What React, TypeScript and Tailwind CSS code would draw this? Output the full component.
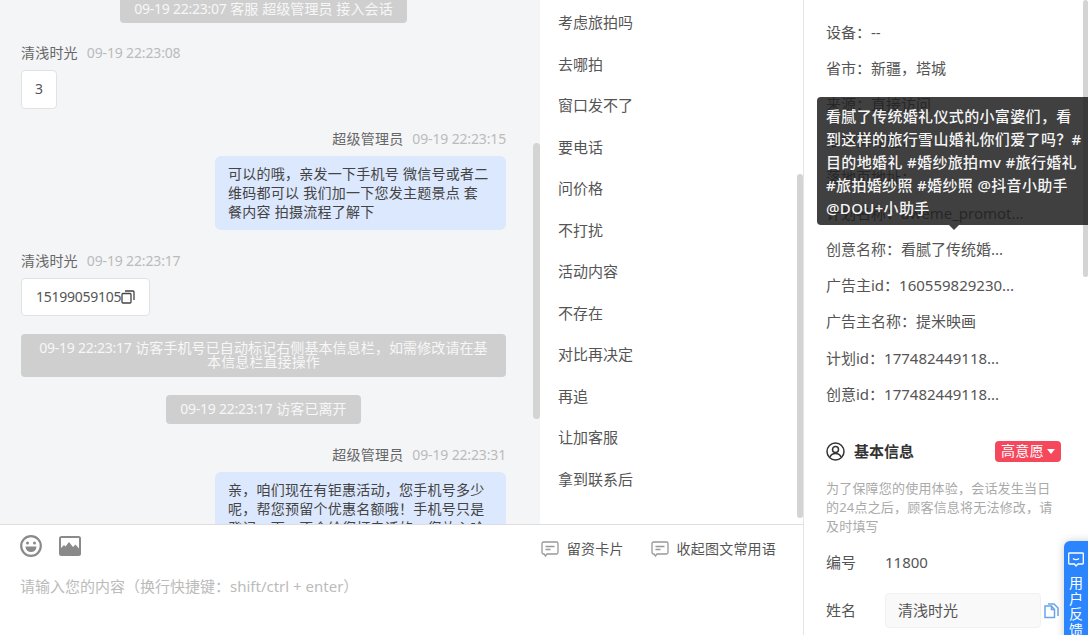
import React from "react";

const FONT = "font-['Noto_Sans','Noto_Sans_CJK_SC',sans-serif]";

const phrases = ["考虑旅拍吗", "去哪拍", "窗口发不了", "要电话", "问价格", "不打扰", "活动内容", "不存在", "对比再决定", "再追", "让加客服", "拿到联系后"];

const infoRows = [
  "设备\uFF1A--",
  "省市\uFF1A新疆\uFF0C塔城",
  "来源\uFF1A直接访问",
  "落地页标题\uFF1A",
  "落地页地址\uFF1A",
  "计划名称\uFF1Aaweme_promot...",
  "创意名称\uFF1A看腻了传统婚...",
  "广告主id\uFF1A160559829230...",
  "广告主名称\uFF1A提米映画",
  "计划id\uFF1A177482449118...",
  "创意id\uFF1A177482449118...",
];

const Time = ({ children }: { children: React.ReactNode }) => <span className="tracking-[-0.25px]">{children}</span>;

const Notice = ({ children, className = "" }: { children: React.ReactNode; className?: string }) => (
  <div className={`rounded-sm bg-[#cfcfcf] px-[14px] py-[7.5px] text-center text-sm leading-[14px] tracking-[0.1px] text-[#f7f7f7] ${className}`}>{children}</div>
);

const Meta = ({ name, time, right }: { name: string; time: string; right?: boolean }) => (
  <div className={`flex h-5 items-center gap-[9px] text-sm leading-5 ${right ? "justify-end" : ""}`}>
    <span className="tracking-[0.2px] text-[#666]">{name}</span>
    <span className="tracking-[-0.15px] text-[#bbb]">{time}</span>
  </div>
);

const MsgIcon = () => (
  <svg width="18" height="16" viewBox="0 0 18 16" fill="none" stroke="#999" strokeWidth="1.3">
    <path d="M2.5 1h13a1.5 1.5 0 0 1 1.5 1.5v9a1.5 1.5 0 0 1-1.5 1.5H6l-1.5 2L3 13h-.5A1.5 1.5 0 0 1 1 11.500v-9A1.500 1.500 0 0 1 2.500 1z" />
    <path d="M4.500 5.500h9M4.500 8.500h5" />
  </svg>
);

const SmileIcon = () => (
  <svg width="22" height="22" viewBox="0 0 22 22">
    <circle cx="11" cy="11" r="9.800" fill="none" stroke="#8a8a8a" strokeWidth="2.200" />
    <circle cx="7.500" cy="8" r="1.500" fill="#8a8a8a" />
    <circle cx="14.500" cy="8" r="1.500" fill="#8a8a8a" />
    <path d="M5.500 11.500h11a5.500 5.500 0 0 1-11 0z" fill="#8a8a8a" />
  </svg>
);

const ImageIcon = () => (
  <svg width="22" height="20" viewBox="0 0 22 20">
    <rect width="22" height="20" rx="2.500" fill="#8a8a8a" />
    <path d="M2 2h18v10.500l-3.500-4-2.500 2.500-4-5-3.500 4.500-1.500-1.500L2 12z" fill="#fff" />
  </svg>
);

export default function App() {
  return (
    <div className={`${FONT} flex h-screen w-full overflow-hidden bg-white`}>
      <div className="flex w-[803px] flex-col">
        <div className="flex h-[525px] border-b border-[#dedede]">
          {/* 会话记录 */}
          <div className="relative w-[540px] overflow-hidden bg-[#f4f5f7] pl-[21px] pr-[34px]">
            <div className="-mt-[6px] flex flex-col">
              <Notice className="self-center px-[13px]">
                <Time>09-19 22:23:07</Time> 客服 超级管理员 接入会话
              </Notice>
              <div className="mt-5">
                <Meta name="清浅时光" time="09-19 22:23:08" />
              </div>
              <div className="mt-[7px] flex h-[38.5px] w-9 items-center justify-center rounded border border-[#e2e2e2] bg-white text-sm text-[#555]">3</div>
              <div className="mt-5">
                <Meta name="超级管理员" time="09-19 22:23:15" right />
              </div>
              <div className="mt-[7px] w-[291px] self-end rounded-md bg-[#dce8fd] px-[13px] py-[8.5px] text-sm leading-[19px] tracking-[0.25px] text-[#444]">
                可以的哦&#xFF0C;亲发一下手机号 微信号或者二维码都可以 我们加一下您发主题景点 套<br />餐内容 拍摄流程了解下
              </div>
              <div className="mt-[21px]">
                <Meta name="清浅时光" time="09-19 22:23:17" />
              </div>
              <div className="mt-[7px] flex h-[38px] w-[129px] items-center rounded border border-[#e2e2e2] bg-white pl-[14px] text-sm text-[#555]">
                <Time>15199059105</Time>
                <svg width="14" height="14" viewBox="0 0 14 14" fill="none" stroke="#444" strokeWidth="1.300" className="shrink-0">
                  <rect x="1" y="3.500" width="9" height="9.500" rx="1" />
                  <path d="M4 1h8a1 1 0 0 1 1 1v8" />
                </svg>
              </div>
              <Notice className="mt-[18px]">
                <Time>09-19 22:23:17</Time> 访客手机号已自动标记右侧基本信息栏&#xFF0C;如需修改请在基本信息栏直接操作
              </Notice>
              <Notice className="mt-[18px] self-center">
                <Time>09-19 22:23:17</Time> 访客已离开
              </Notice>
              <div className="mt-[21px]">
                <Meta name="超级管理员" time="09-19 22:23:31" right />
              </div>
              <div className="mt-[7px] w-[291px] self-end rounded-md bg-[#dce8fd] px-[13px] py-[8.5px] text-sm leading-[19px] tracking-[0.25px] text-[#444]">
                亲&#xFF0C;咱们现在有钜惠活动&#xFF0C;您手机号多少呢&#xFF0C;帮您预留个优惠名额哦&#xFF01;手机号只是登记一下&#xFF0C;不会给您打电话的&#xFF0C;您放心哈
              </div>
            </div>
            <div className="absolute right-0 top-[143px] h-[276px] w-[7px] rounded bg-[#d4d4d4]" />
          </div>

          {/* 常用语 */}
          <div className="relative flex-1 overflow-hidden pl-[18px] pt-[1.500px] text-[15px] text-[#555]">
            {phrases.map((p) => (
              <div key={p} className="flex h-[41.5px] items-center">
                {p}
              </div>
            ))}
            <div className="absolute right-0 top-[174px] h-[344px] w-[6px] rounded bg-[#d4d4d4]" />
          </div>
        </div>

        {/* 输入区 */}
        <div className="flex-1 px-5 pt-[10px]">
          <div className="flex h-[22px] items-center">
            <SmileIcon />
            <span className="ml-[17px]">
              <ImageIcon />
            </span>
            <div className="ml-auto mr-[7px] mt-[5px] flex items-center text-sm text-[#555]">
              <MsgIcon />
              <span className="ml-[8px] tracking-[0.2px]">留资卡片</span>
              <span className="ml-[27px]">
                <MsgIcon />
              </span>
              <span className="ml-[8px] tracking-[0.2px]">收起图文常用语</span>
            </div>
          </div>
          <div className="mt-[19px] text-[15px] leading-5 text-[#bbb]">请输入您的内容&#xFF08;换行快捷键&#xFF1A;shift/ctrl + enter&#xFF09;</div>
        </div>
      </div>

      {/* 右侧信息栏 */}
      <div className="relative flex-1 overflow-hidden border-l border-[#e4e4e4] pl-[22px] pr-[27px] pt-[14px] text-[15px] text-[#555]">
        {infoRows.map((r) => (
          <div key={r} className="flex h-[36.2px] items-center whitespace-nowrap">
            {r}
          </div>
        ))}

        <div className="mt-[28px] flex h-[22px] items-center">
          <svg width="19" height="19" viewBox="0 0 19 19" fill="none" stroke="#333" strokeWidth="1.500">
            <circle cx="9.500" cy="9.500" r="8.500" />
            <circle cx="9.500" cy="7.500" r="3" />
            <path d="M4 15c1-2.500 3-3.500 5.500-3.500S14 12.500 15 15" />
          </svg>
          <span className="ml-[9px] font-bold text-[#333]">基本信息</span>
          <span className="ml-auto flex h-[21px] w-[66px] items-center justify-center gap-[3px] rounded-sm bg-[#f5485c] text-sm tracking-[0.3px] text-white">
            高意愿
            <svg width="8" height="5" viewBox="0 0 8 5" fill="#fff">
              <path d="M0 0h8L4 5z" />
            </svg>
          </span>
        </div>

        <div className="mt-[17px] text-[13px] leading-[19px] tracking-[0.2px] text-[#aaa]">为了保障您的使用体验&#xFF0C;会话发生当日的24点之后&#xFF0C;顾客信息将无法修改&#xFF0C;请及时填写</div>

        <div className="mt-[16px] flex h-5 items-center">
          <span className="w-[59px]">编号</span>
          <span>11800</span>
        </div>

        <div className="mt-[21px] flex items-center">
          <span className="w-[59px]">姓名</span>
          <div className="flex h-[35px] w-[156px] items-center rounded-sm border border-[#f1f1f1] bg-[#f9f9f9] pl-3 text-[#555]">清浅时光</div>
          <svg width="15" height="16" viewBox="0 0 15 16" fill="none" stroke="#69a5e8" strokeWidth="1.500" className="ml-[3px] shrink-0">
            <path d="M1 3v11.500h9.500V6.500L7.500 3z" />
            <path d="M4 1h6l4 4v8" />
            <path d="M7.500 3v3.500h3" />
          </svg>
        </div>

        <div className="absolute right-0 top-0 h-[277px] w-[5px] rounded bg-[#d4d4d4]" />

        {/* 提示气泡 */}
        <div className="absolute left-[13px] top-[97px] h-[128px] w-[280px] rounded-sm bg-[rgba(30,30,30,0.85)] pl-[9px] pt-[8px] text-[15px] font-medium leading-[23px] tracking-[0.35px] text-[#f5f5f5]">
          <div className="whitespace-nowrap">看腻了传统婚礼仪式的小富婆们&#xFF0C;看</div>
          <div className="whitespace-nowrap">到这样的旅行雪山婚礼你们爱了吗&#xFF1F;#</div>
          <div className="whitespace-nowrap">目的地婚礼 #婚纱旅拍mv #旅行婚礼</div>
          <div className="whitespace-nowrap">#旅拍婚纱照 #婚纱照 @抖音小助手</div>
          <div className="whitespace-nowrap">@DOU+小助手</div>
          <div className="absolute left-[132px] top-full h-0 w-0 border-x-[5px] border-t-[5px] border-x-transparent border-t-[rgba(30,30,30,0.85)]" />
        </div>

        {/* 用户反馈 */}
        <div className="absolute left-[260px] top-[541px] flex h-[110px] w-[30px] flex-col items-center rounded-tl-md bg-[#2a85ff] pr-[6px] pt-[11px] text-sm leading-[15.500px] text-white shadow-[0_0_8px_rgba(0,0,0,0.2)]">
          <svg width="16" height="15" viewBox="0 0 16 15" fill="none" stroke="#fff" strokeWidth="1.300">
            <path d="M1.500 1h13a.8.8 0 0 1 .8.800v9.400a.8.8 0 0 1-.8.800H10l-2 2-1.500-2h-5a.8.8 0 0 1-.8-.800V1.800a.8.8 0 0 1 .8-.800z" />
            <path d="M5 6.500c1.500 1.500 4.500 1.500 6 0" />
          </svg>
          <div className="mt-[8px] text-center">
            用<br />户<br />反<br />馈
          </div>
        </div>
      </div>
    </div>
  );
}
